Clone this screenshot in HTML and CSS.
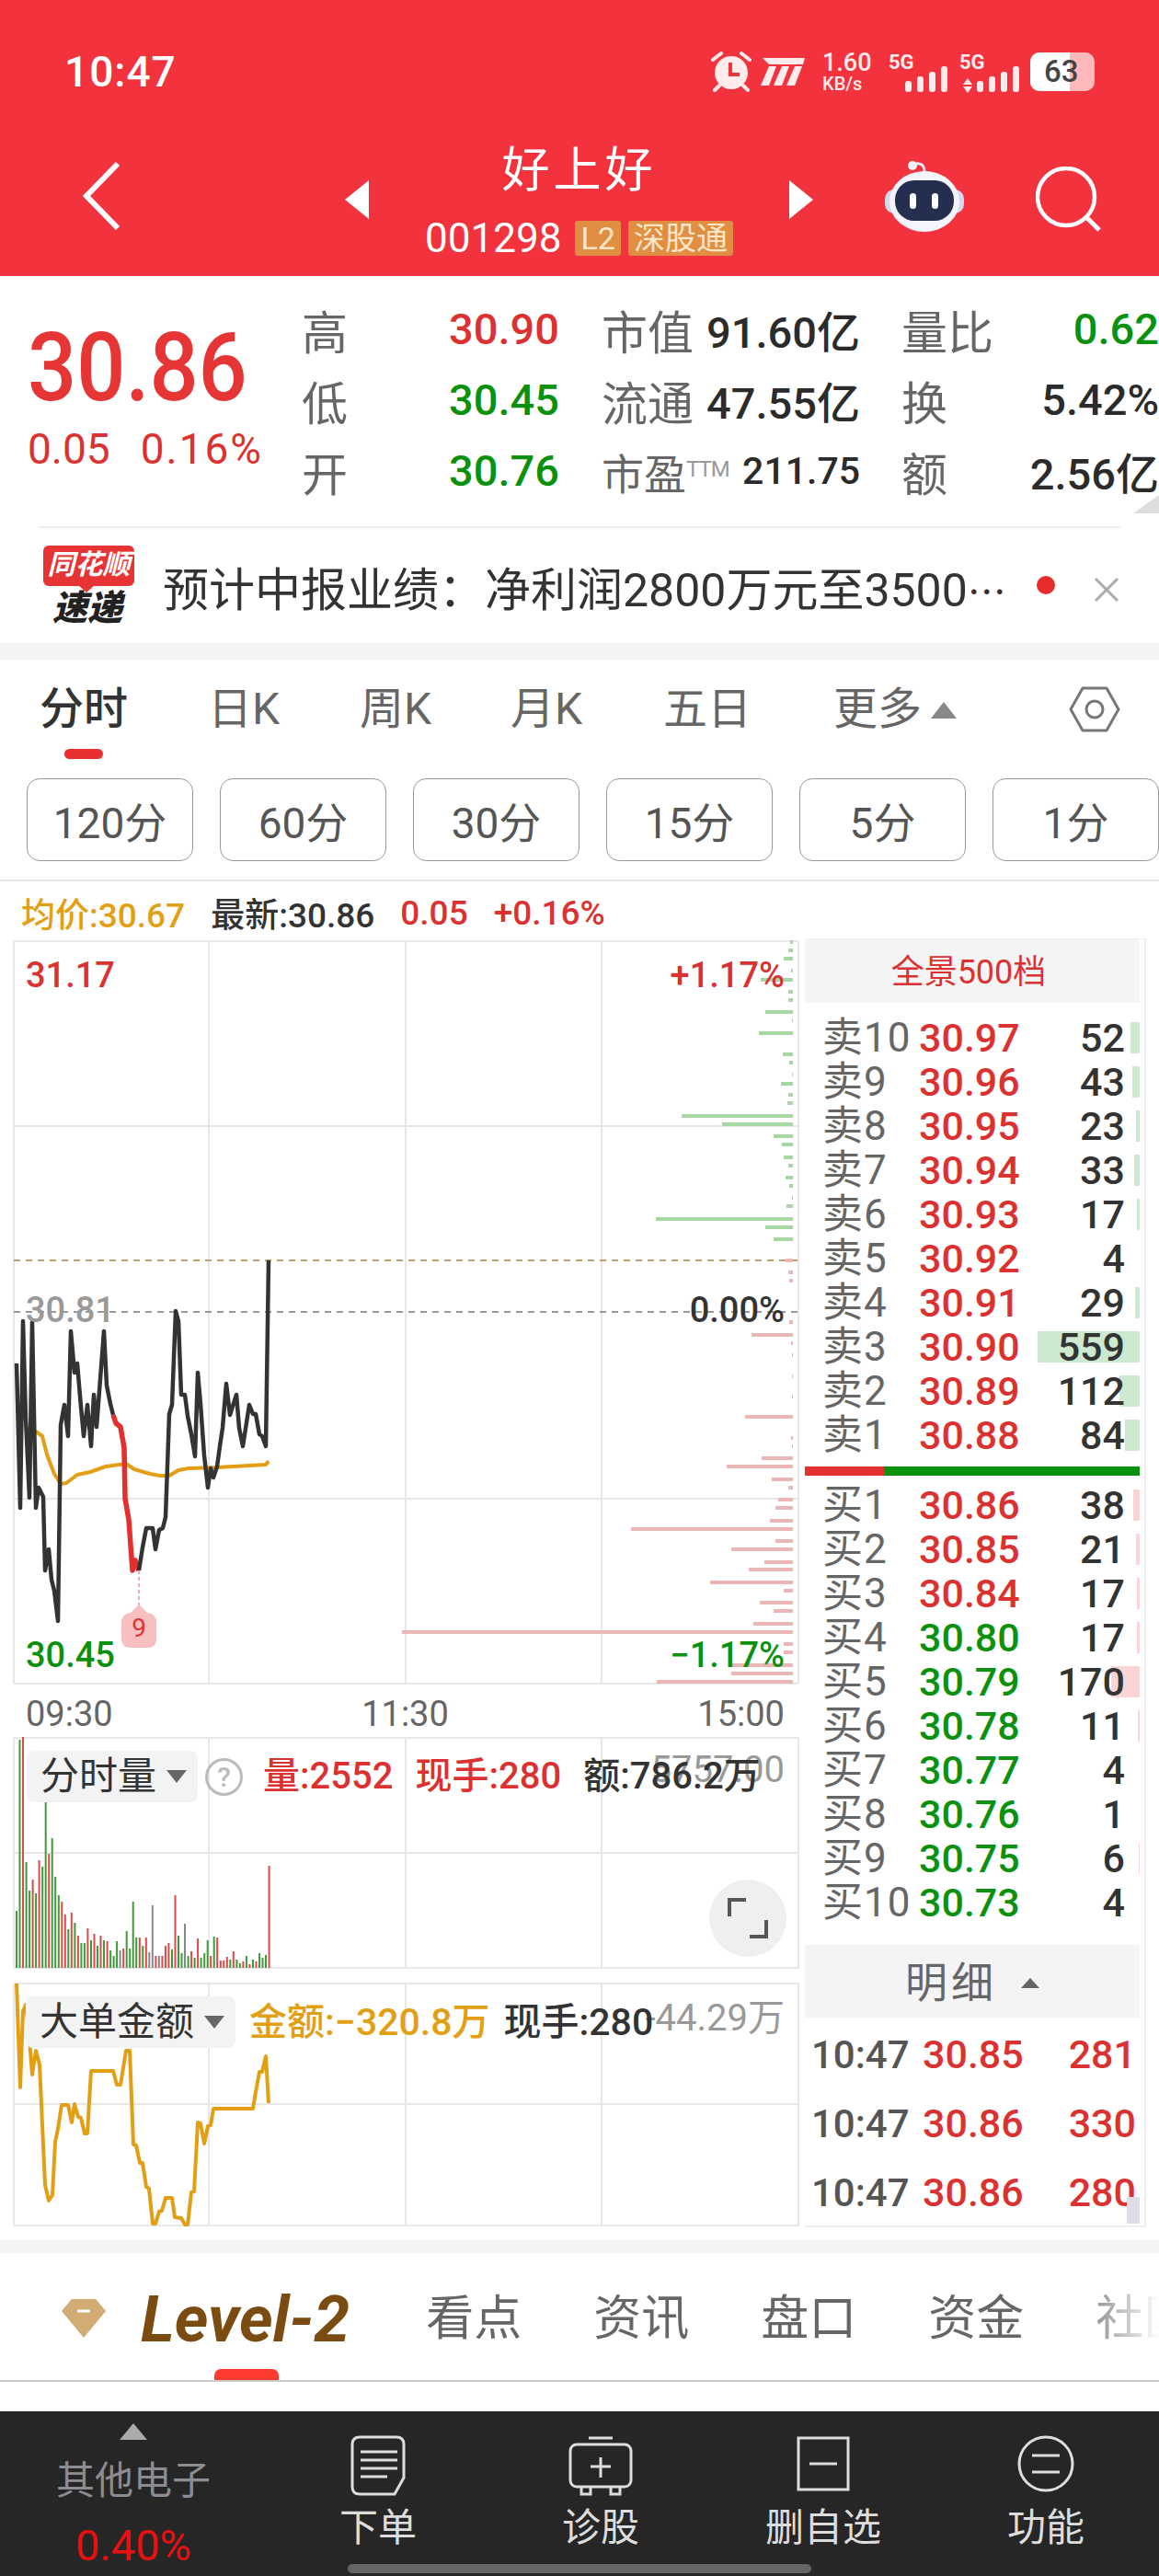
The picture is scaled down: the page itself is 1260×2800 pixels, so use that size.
FILE: index.html
```html
<!DOCTYPE html>
<html lang="zh-CN">
<head>
    <meta charset="UTF-8">
    <meta name="viewport" content="width=device-width, initial-scale=1.0">
    <title>好上好 001298</title>
    <link rel="stylesheet" href="styles.css">
</head>
<body>

<div class="app">
    <header class="top">
        <div class="status-bar">
            <span class="clock">10:47</span>
            <div class="status-icons">
                <svg class="ic-alarm" width="46" height="44" viewBox="0 0 46 44">
                    <circle cx="23" cy="23" r="18" fill="#ffeaec"/>
                    <path d="M22 12v13h10" fill="none" stroke="#f2323c" stroke-width="4"/>
                    <path d="M3 9l9-7M43 9l-9-7M10 37l-5 5M36 37l5 5" fill="none" stroke="#ffeaec" stroke-width="4" stroke-linecap="round"/>
                </svg>
                <svg class="ic-brand" width="48" height="30" viewBox="0 0 48 30">
                    <path d="M2 0H48L46 7H9Z" fill="#ffeaec"/>
                    <path d="M9 9H17L9 30H0ZM23 9H31L23 30H14ZM37 9H45L37 30H28Z" fill="#ffeaec"/>
                </svg>
                <div class="net-speed"><b>1.60</b><span>KB/s</span></div>
                <div class="signal">
                    <span class="sim-label">5G</span>
                    <div class="bars first"><i class="b1"></i><i class="b2"></i><i class="b3"></i><i class="b4"></i></div>
                </div>
                <div class="signal second">
                    <span class="sim-label">5G</span>
                    <div class="bars"><em class="updown"></em><i class="b1"></i><i class="b2"></i><i class="b3"></i><i class="b4"></i></div>
                </div>
                <div class="battery"><div class="battery-fill"></div><span>63</span></div>
            </div>
        </div>
        <div class="nav">
            <svg class="back" width="44" height="76" viewBox="0 0 44 76">
                <path d="M40 3L6 38l34 35" fill="none" stroke="#fff" stroke-width="6"/>
            </svg>
            <div class="stock">
                <span class="tri-left"></span>
                <div class="stock-name">
                    <div class="name">好上好</div>
                    <div class="code-row">
                        <span class="code">001298</span>
                        <span class="tag l2">L2</span>
                        <span class="tag">深股通</span>
                    </div>
                </div>
                <span class="tri-right"></span>
            </div>
            <svg class="robot" width="86" height="80" viewBox="0 0 86 80">
                <path d="M30 10q3-8 10-4q3 2 3 9" fill="none" stroke="#e8e8f6" stroke-width="3"/>
                <circle cx="30" cy="7" r="5" fill="#f0f0fa"/>
                <rect x="0" y="33" width="86" height="26" rx="10" fill="#d7d8ee"/>
                <ellipse cx="43" cy="46" rx="38" ry="33" fill="#f4f4fc"/>
                <rect x="11" y="23" width="64" height="44" rx="21" fill="#242f50"/>
                <rect x="27" y="37" width="7" height="17" rx="3.5" fill="#fff"/>
                <rect x="51" y="37" width="7" height="17" rx="3.5" fill="#fff"/>
            </svg>
            <svg class="search" width="72" height="72" viewBox="0 0 72 72">
                <circle cx="33" cy="33" r="31" fill="none" stroke="#fff" stroke-width="4.5"/>
                <path d="M55 55l14 14" stroke="#fff" stroke-width="5"/>
            </svg>
        </div>
    </header>

    <section class="quote">
        <div class="price-col">
            <div class="big-price">30.86</div>
            <div class="change"><span>0.05</span><span class="change-pct">0.16%</span></div>
        </div>
        <div class="stats">
            <span class="lbl">高</span><span class="red">30.90</span>
            <div class="stat wide"><span class="lbl">市值</span><b>91.60亿</b></div>
            <div class="stat"><span class="lbl">量比</span><span class="green">0.62</span></div>

            <span class="lbl">低</span><span class="green">30.45</span>
            <div class="stat wide"><span class="lbl">流通</span><b>47.55亿</b></div>
            <div class="stat"><span class="lbl">换</span><b>5.42%</b></div>

            <span class="lbl">开</span><span class="green">30.76</span>
            <div class="stat wide"><span class="lbl pe-lbl">市盈<sup>TTM</sup></span><b class="pe">211.75</b></div>
            <div class="stat"><span class="lbl">额</span><b>2.56亿</b></div>
        </div>
        <span class="corner"></span>
    </section>
    <div class="rule"></div>

    <section class="news">
        <div class="news-logo">
            <div class="logo-top">同花顺</div>
            <div class="logo-bottom">速递</div>
        </div>
        <div class="news-text">预计中报业绩：净利润2800万元至3500<span class="cjk-dots">…</span></div>
        <span class="news-dot"></span>
        <svg class="news-close" width="30" height="30" viewBox="0 0 30 30">
            <path d="M3 3l24 24M27 3L3 27" stroke="#aaa" stroke-width="3"/>
        </svg>
    </section>
    <div class="band"></div>

    <nav class="tabs">
        <a class="active">分时</a>
        <a>日K</a>
        <a>周K</a>
        <a>月K</a>
        <a>五日</a>
        <a class="more">更多<span class="tri-up"></span></a>
        <svg class="gear" width="56" height="52" viewBox="0 0 56 52">
            <path d="M15 3H41L54 26L41 49H15L2 26Z" fill="none" stroke="#777" stroke-width="3" stroke-linejoin="round"/>
            <circle cx="28" cy="26" r="9" fill="none" stroke="#777" stroke-width="3"/>
        </svg>
    </nav>
    <div class="periods">
        <button>120分</button>
        <button>60分</button>
        <button>30分</button>
        <button>15分</button>
        <button>5分</button>
        <button>1分</button>
    </div>
    <div class="chart-info">
        <span class="orange">均价:30.67</span>
        <span class="dark">最新:30.86</span>
        <span class="red">0.05</span>
        <span class="red">+0.16%</span>
    </div>

    <div class="market">
        <div class="charts">
            <div class="chart chart-main">
                <svg width="875" height="810" viewBox="0 1023 875 810">
                    <path class="grid" d="M15 1024H868M15 1225H868M15 1630H868M15 1831H868M15 1024V1831M227 1024V1831M441 1024V1831M654 1024V1831M868 1024V1831"/>
                    <path class="dash-gray" d="M15 1427H868"/>
                    <path class="dash-tan" d="M15 1371H868"/>
                    <path class="depth-green" d="M862 1025h-3M862 1034h-5M862 1043h-10M862 1056h-2M862 1066h-35M862 1079h-5M862 1088h-5M862 1101h-30M862 1110h-1M862 1124h-37M862 1147h-11M862 1156h-4M862 1169h-1M862 1179h-13M862 1191h-5M862 1200h-6M862 1214h-121M862 1223h-77M862 1236h-21M862 1245h-12M862 1259h-10M862 1268h-5M862 1281h-8M862 1290h-4M862 1303h-1M862 1312h-7M862 1326h-149M862 1335h-30M862 1348h-21"/>
                    <path class="depth-red" d="M862 1371h-8M862 1384h-5M862 1393h-4M862 1438h-4M862 1452h-45M862 1461h-2M862 1474h-1M862 1497h-1M862 1519h-1M862 1541h-52M862 1564h-2M862 1573h-1M862 1586h-34M862 1595h-72M862 1609h-23M862 1618h-5M862 1631h-16M862 1640h-19M862 1654h-25M862 1663h-176M862 1676h-19M862 1685h-67M862 1699h-31M862 1707h-48M862 1721h-90M862 1730h-10M862 1743h-36M862 1752h-21M862 1766h-43M862 1775h-425M862 1788h-10M862 1797h-10M862 1811h-67M862 1820h-67M862 1829h-148"/>
                    <polyline class="line-avg" points="28,1552 39,1557 46,1562 51,1582 54,1590 59,1603 66,1614 72,1613 84,1604 98,1601 115,1595 137,1592 146,1598 163,1603 174,1605 184,1605 194,1599 205,1597 236,1596 253,1595 289,1593 292,1589"/>
                    <polyline class="line-price" points="18,1483 22,1640 25,1437 28,1543 32,1629 35,1438 39,1640 42,1618 47,1628 49,1708 53,1685 56,1718 59,1730 63,1763 66,1550 70,1528 74,1562 77,1448 81,1493 84,1483 88,1530 91,1562 95,1528 99,1573 102,1517 105,1552 113,1448 116,1507 120,1527 123,1539"/>
                    <polyline class="line-hot" points="123,1539 126,1548 131,1552 135,1575 136,1630 140,1653 144,1708 147,1697 151,1708"/>
                    <polyline class="line-price" points="151,1708 155,1683 159,1662 166,1662 169,1685 173,1664 177,1662 180,1650 184,1538 187,1528 191,1426 194,1437 197,1517 201,1517 204,1540 208,1560 212,1584 215,1493 218,1527 222,1583 226,1618 229,1597 232,1607 236,1595 239,1573 242,1553 246,1505 250,1539 257,1517 260,1553 264,1573 271,1528 275,1538 278,1538 282,1560 285,1562 289,1573 292,1371"/>
                    <path class="pin-line" d="M151 1708V1747"/>
                    <path class="pin" d="M151 1745L160 1754Q170 1755 170 1765V1782Q170 1792 160 1792H142Q132 1792 132 1782V1765Q132 1755 142 1754Z"/>
                    <text class="pin-text" x="151" y="1780">9</text>
                </svg>
                <span class="axis axis-high red">31.17</span>
                <span class="axis axis-mid gray">30.81</span>
                <span class="axis axis-low green">30.45</span>
                <span class="axis pct-high red">+1.17%</span>
                <span class="axis pct-mid dark">0.00%</span>
                <span class="axis pct-low green">−1.17%</span>
            </div>
            <div class="time-axis"><span>09:30</span><span>11:30</span><span>15:00</span></div>

            <div class="chart chart-volume">
                <svg width="875" height="252" viewBox="0 1889 875 252">
                    <path class="grid" d="M15 1890H868M15 2015H868M15 2140H868M15 1890V2140M227 1890V2140M441 1890V2140M654 1890V2140M868 1890V2140"/>
                    <path class="vol-green" d="M18 2140V2078M21.5 2140V1892M28.6 2140V2025M32.1 2140V2056M39.1 2140V2059M46.2 2140V2030M49.7 2140V1951M56.7 2140V1999M60.2 2140V2041M63.8 2140V2061M74.3 2140V2098M81.4 2140V2091M88.4 2140V2113M91.9 2140V2113M99 2140V2110M106 2140V2116M113 2140V2110M120.1 2140V2121M123.6 2140V2127M127.1 2140V2111M137.7 2140V2100M141.2 2140V2119M144.7 2140V2068M148.2 2140V2107M155.3 2140V2116M187 2140V2120M194 2140V2105M197.5 2140V2124M204.6 2140V2127M211.6 2140V2129M218.6 2140V2129M222.2 2140V2124M225.7 2140V2110M232.7 2140V2106M250.3 2140V2131M257.4 2140V2131M260.9 2140V2135M267.9 2140V2127M275 2140V2131M282 2140V2124M285.5 2140V2129M289 2140V2126"/>
                    <path class="vol-red" d="M25 2140V1889M35.6 2140V2044M42.6 2140V2023M53.2 2140V2016M67.3 2140V2068M70.8 2140V2082M77.8 2140V2080M84.9 2140V2105M95.4 2140V2097M102.5 2140V2103M109.5 2140V2105M116.6 2140V2111M134.2 2140V2119M151.8 2140V2107M158.8 2140V2107M169.4 2140V2127M176.4 2140V2127M179.9 2140V2116M183.4 2140V2113M190.5 2140V2061M208.1 2140V2122M215.1 2140V2108M229.2 2140V2127M236.2 2140V2107M239.8 2140V2132M243.3 2140V2132M246.8 2140V2128M253.8 2140V2122M264.4 2140V2133M271.4 2140V2136M278.5 2140V2133M292.6 2140V2029"/>
                    <path class="vol-gray" d="M130.6 2140V2121M162.3 2140V2123M165.8 2140V2072M172.9 2140V2127M201 2140V2092"/>
                </svg>
                <span class="chart-max vol-max">5757.00</span>
                <div class="chart-head">
                    <div class="pill">分时量<span class="tri-down"></span></div>
                    <span class="help">?</span>
                    <span class="red stat-first">量:2552</span>
                    <span class="red">现手:280</span>
                    <span class="dark">额:786.2万</span>
                </div>
                <div class="fullscreen">
                    <svg width="44" height="44" viewBox="0 0 44 44">
                        <path d="M2 20V2H20M42 24V42H24" fill="none" stroke="#555" stroke-width="4"/>
                    </svg>
                </div>
            </div>

            <div class="chart chart-amount">
                <svg width="875" height="265" viewBox="0 2156 875 265">
                    <path class="grid" d="M15 2157H868M15 2288H868M15 2420H868M15 2157V2420M227 2157V2420M441 2157V2420M654 2157V2420M868 2157V2420"/>
                    <polyline class="line-amount" points="18,2157 22,2270 25,2187 28,2180 31,2205 35,2256 39,2230 43,2245 49,2376 53,2393 57,2387 60,2329 63,2315 67,2289 74,2289 78,2308 81,2288 85,2302 88,2303 92,2320 95,2320 99,2252 123,2252 127,2267 131,2267 137,2230 141,2230 145,2332 148,2333 152,2352 155,2352 159,2378 162,2380 166,2418 169,2418 173,2405 176,2404 180,2390 187,2390 190,2411 197,2412 201,2419 204,2419 208,2384 211,2383 215,2308 218,2309 222,2331 226,2312 229,2311 232,2293 275,2293 278,2275 282,2253 285,2253 289,2236 292,2287"/>
                </svg>
                <span class="chart-max amount-max">-44.29万</span>
                <div class="chart-head amount-head">
                    <div class="pill">大单金额<span class="tri-down"></span></div>
                    <span class="orange">金额:−320.8万</span>
                    <span class="dark">现手:280</span>
                </div>
            </div>
        </div>

        <aside class="book">
            <div class="book-title">全景500档</div>
            <div class="rows">
                <div class="row sell"><i style="width:10px"></i><span class="level">卖10</span><span class="red">30.97</span><span class="qty">52</span></div>
                <div class="row sell"><i style="width:8px"></i><span class="level">卖9</span><span class="red">30.96</span><span class="qty">43</span></div>
                <div class="row sell"><i style="width:4px"></i><span class="level">卖8</span><span class="red">30.95</span><span class="qty">23</span></div>
                <div class="row sell"><i style="width:6px"></i><span class="level">卖7</span><span class="red">30.94</span><span class="qty">33</span></div>
                <div class="row sell"><i style="width:3px"></i><span class="level">卖6</span><span class="red">30.93</span><span class="qty">17</span></div>
                <div class="row sell"><span class="level">卖5</span><span class="red">30.92</span><span class="qty">4</span></div>
                <div class="row sell"><i style="width:5px"></i><span class="level">卖4</span><span class="red">30.91</span><span class="qty">29</span></div>
                <div class="row sell"><i style="width:111px"></i><span class="level">卖3</span><span class="red">30.90</span><span class="qty">559</span></div>
                <div class="row sell"><i style="width:22px"></i><span class="level">卖2</span><span class="red">30.89</span><span class="qty">112</span></div>
                <div class="row sell"><i style="width:16px"></i><span class="level">卖1</span><span class="red">30.88</span><span class="qty">84</span></div>
            </div>
            <div class="split"><span class="split-red"></span><span class="split-green"></span></div>
            <div class="rows">
                <div class="row buy"><i style="width:7px"></i><span class="level">买1</span><span class="red">30.86</span><span class="qty">38</span></div>
                <div class="row buy"><i style="width:4px"></i><span class="level">买2</span><span class="red">30.85</span><span class="qty">21</span></div>
                <div class="row buy"><i style="width:3px"></i><span class="level">买3</span><span class="red">30.84</span><span class="qty">17</span></div>
                <div class="row buy"><i style="width:3px"></i><span class="level">买4</span><span class="green">30.80</span><span class="qty">17</span></div>
                <div class="row buy"><i style="width:31px"></i><span class="level">买5</span><span class="green">30.79</span><span class="qty">170</span></div>
                <div class="row buy"><i style="width:2px"></i><span class="level">买6</span><span class="green">30.78</span><span class="qty">11</span></div>
                <div class="row buy"><span class="level">买7</span><span class="green">30.77</span><span class="qty">4</span></div>
                <div class="row buy"><span class="level">买8</span><span class="green">30.76</span><span class="qty">1</span></div>
                <div class="row buy"><i style="width:1px"></i><span class="level">买9</span><span class="green">30.75</span><span class="qty">6</span></div>
                <div class="row buy"><span class="level">买10</span><span class="green">30.73</span><span class="qty">4</span></div>
            </div>
            <div class="detail-title">明细<span class="tri-up"></span></div>
            <div class="ticks">
                <div class="tick"><span class="tick-time">10:47</span><span class="red">30.85</span><span class="red tick-qty">281</span></div>
                <div class="tick"><span class="tick-time">10:47</span><span class="red">30.86</span><span class="red tick-qty">330</span></div>
                <div class="tick"><span class="tick-time">10:47</span><span class="red">30.86</span><span class="red tick-qty">280</span></div>
                <span class="scroll-thumb"></span>
            </div>
        </aside>
    </div>
    <div class="band band-low"></div>

    <nav class="sub-tabs">
        <svg class="gem" width="50" height="44" viewBox="0 0 50 44">
            <path d="M12 1H38L49 14L25 43L1 14Z" fill="#d2ab75"/>
            <path d="M18 14H32" stroke="#fff" stroke-width="3"/>
        </svg>
        <a class="level2">Level-2</a>
        <a>看点</a>
        <a>资讯</a>
        <a>盘口</a>
        <a>资金</a>
        <a class="faded">社区</a>
    </nav>

    <footer class="bottom">
        <div class="sector">
            <span class="sector-arrow"></span>
            <div class="sector-name">其他电子</div>
            <div class="sector-pct">0.40%</div>
        </div>
        <div class="action">
            <svg width="60" height="66" viewBox="0 0 60 66">
                <path d="M10 2H50Q58 2 58 10V46L48 64H10Q2 64 2 56V10Q2 2 10 2Z" fill="none" stroke="#ddd" stroke-width="3"/>
                <path d="M11 18H51M11 27H51M11 36H51M11 45H40" stroke="#ddd" stroke-width="3"/>
            </svg>
            <span>下单</span>
        </div>
        <div class="action">
            <svg width="70" height="66" viewBox="0 0 70 66">
                <path d="M22 3H48" stroke="#ddd" stroke-width="3"/>
                <rect x="2" y="10" width="66" height="46" rx="7" fill="none" stroke="#ddd" stroke-width="3"/>
                <path d="M14 56V64H24V56M46 56V64H56V56" fill="none" stroke="#ddd" stroke-width="3"/>
                <path d="M35 24V46M24 34H46" stroke="#ddd" stroke-width="3"/>
            </svg>
            <span>诊股</span>
        </div>
        <div class="action">
            <svg width="60" height="66" viewBox="0 0 60 66">
                <rect x="3" y="3" width="54" height="56" fill="none" stroke="#ddd" stroke-width="3"/>
                <path d="M15 31H45" stroke="#ddd" stroke-width="3"/>
            </svg>
            <span>删自选</span>
        </div>
        <div class="action">
            <svg width="62" height="66" viewBox="0 0 62 66">
                <ellipse cx="31" cy="31" rx="29" ry="29" fill="none" stroke="#ddd" stroke-width="3"/>
                <path d="M16 22H46M16 40H46" stroke="#ddd" stroke-width="3"/>
            </svg>
            <span>功能</span>
        </div>
        <span class="home-bar"></span>
    </footer>
</div>

</body>
</html>
```

FILE: styles.css
```css
* {
    box-sizing: border-box;
}
body {
    margin: 0;
    background-color: #fff;
    font-family: Roboto, "Noto Sans CJK SC", sans-serif;
    color: #333;
}
.app {
    width: 1260px;
    height: 2800px;
    overflow: hidden;
}
.red { color: #db3131; }
.green { color: #0a920f; }
.orange { color: #e39f14; }
.dark { color: #333; }
.gray { color: #999; }

/* red header */
.top {
    height: 300px;
    background-color: #f2323c;
    color: #fff;
}
.status-bar {
    height: 140px;
    display: flex;
    justify-content: space-between;
    padding: 52px 70px 0 70px;
}
.clock {
    font-size: 46px;
    line-height: 52px;
    font-weight: 500;
    letter-spacing: 1px;
    color: #fff;
}
.status-icons {
    display: flex;
    align-items: flex-start;
    height: 46px;
}
.ic-alarm {
    margin: 4px 0 0 0;
}
.ic-brand {
    margin: 11px 0 0 9px;
}
.net-speed {
    margin: 3px 0 0 19px;
    width: 52px;
    color: #ffeaec;
}
.net-speed b {
    display: block;
    font-size: 27px;
    line-height: 26px;
    font-weight: 500;
}
.net-speed span {
    display: block;
    font-size: 20px;
    line-height: 20px;
    font-weight: 500;
}
.signal {
    position: relative;
    width: 64px;
    height: 46px;
    margin: 0 0 0 20px;
}
.signal.second {
    width: 65px;
    margin-left: 13px;
}
.sim-label {
    position: absolute;
    left: 0;
    top: 5px;
    font-size: 22px;
    line-height: 22px;
    font-weight: 700;
    color: #ffeaec;
}
.bars {
    position: absolute;
    right: 0;
    top: 16px;
    height: 32px;
    display: flex;
    align-items: flex-end;
    gap: 6px;
}
.bars i {
    width: 7px;
    border-radius: 3px;
    background-color: #ffeaec;
}
.bars .b1 { height: 12px; }
.bars .b2 { height: 17px; }
.bars .b3 { height: 22px; }
.bars .b4 { height: 28px; }
.updown {
    width: 10px;
    height: 7px;
    border-left: 5px solid transparent;
    border-right: 5px solid transparent;
    border-bottom: 7px solid #ffeaec;
    margin-bottom: 8px;
    margin-right: -1px;
    position: relative;
}
.updown::after {
    content: "";
    position: absolute;
    left: -5px;
    top: 9px;
    border-left: 5px solid transparent;
    border-right: 5px solid transparent;
    border-top: 7px solid #ffeaec;
}
.battery {
    position: relative;
    width: 70px;
    height: 42px;
    margin: 5px 0 0 12px;
    border-radius: 10px;
    background-color: #ffb9bc;
    overflow: hidden;
    text-align: center;
}
.battery-fill {
    position: absolute;
    left: 0;
    top: 0;
    bottom: 0;
    width: 43px;
    background-color: #fff;
}
.battery span {
    position: absolute;
    left: 15px;
    top: 2px;
    font-size: 33px;
    line-height: 38px;
    font-weight: 500;
    color: #444;
}
.nav {
    height: 160px;
    display: flex;
    align-items: flex-start;
    padding-left: 88px;
}
.back {
    margin-top: 35px;
}
.stock {
    width: 509px;
    margin-left: 243px;
    display: flex;
    justify-content: space-between;
    align-items: flex-start;
}
.tri-left, .tri-right {
    width: 0;
    height: 0;
    margin-top: 56px;
    border-top: 21px solid transparent;
    border-bottom: 21px solid transparent;
}
.tri-left { border-right: 26px solid #fff; }
.tri-right { border-left: 26px solid #fff; }
.stock-name {
    text-align: center;
    margin-top: 16px;
}
.name {
    font-size: 52px;
    line-height: 60px;
    letter-spacing: 4px;
}
.code-row {
    display: flex;
    align-items: center;
    gap: 8px;
    margin-top: 21px;
    height: 44px;
}
.code {
    font-size: 44px;
    margin-right: 7px;
}
.tag {
    height: 38px;
    padding: 0 6px;
    line-height: 38px;
    font-size: 34px;
    color: #fce6c8;
    background-color: #e08f42;
    border-radius: 3px;
}
.robot {
    margin: 33px 0 0 78px;
}
.search {
    margin: 41px 0 0 78px;
}

/* quote block */
.quote {
    position: relative;
    height: 272px;
    display: flex;
}
.price-col {
    width: 328px;
    padding: 42px 0 0 30px;
}
.big-price {
    font-size: 104px;
    line-height: 116px;
    font-weight: 500;
    color: #e63535;
    transform: scaleX(0.9);
    transform-origin: left center;
    white-space: nowrap;
}
.change {
    display: flex;
    gap: 33px;
    font-size: 46px;
    line-height: 60px;
    color: #db3131;
}
.change-pct {
    letter-spacing: 2px;
}
.stats {
    display: grid;
    grid-template-columns: 160px 166px 326px 280px;
    grid-auto-rows: 77px;
    padding-top: 19px;
    font-size: 47px;
    font-weight: 500;
    align-items: center;
}
.lbl {
    font-size: 50px;
    font-weight: 400;
    color: #666;
    white-space: nowrap;
}
.stats b {
    font-size: 47px;
    font-weight: 500;
    color: #2b2b2b;
    white-space: nowrap;
}
.stat {
    display: flex;
    justify-content: space-between;
    align-items: center;
}
.stat.wide {
    padding-right: 45px;
}
.pe-lbl {
    font-size: 46px;
}
.stats sup {
    font-size: 24px;
    line-height: 0;
    letter-spacing: -1px;
    color: #999;
    vertical-align: 14px;
}
.stats b.pe {
    font-size: 41px;
}
.corner {
    position: absolute;
    right: 0;
    bottom: 14px;
    border-left: 28px solid transparent;
    border-bottom: 20px solid #ddd;
}
.rule {
    height: 2px;
    margin: 0 42px;
    background-color: #eee;
}

/* news strip */
.news {
    height: 125px;
    display: flex;
    align-items: flex-start;
    padding: 19px 42px 0 44px;
}
.news-logo {
    width: 102px;
    margin-right: 31px;
    flex-shrink: 0;
    text-align: center;
}
.logo-top {
    position: relative;
    height: 44px;
    line-height: 42px;
    margin-left: 3px;
    border-radius: 6px;
    background-color: #e63333;
    color: #fff;
    font-size: 30px;
    font-weight: 700;
    font-style: italic;
    white-space: nowrap;
}
.logo-top::after {
    content: "";
    position: absolute;
    left: 38px;
    top: 43px;
    border-left: 9px solid transparent;
    border-right: 9px solid transparent;
    border-top: 8px solid #e63333;
}
.logo-bottom {
    margin-top: 5px;
    font-size: 38px;
    line-height: 38px;
    font-weight: 900;
    font-style: italic;
    color: #222;
}
.news-text {
    width: 920px;
    flex-shrink: 0;
    font-size: 50px;
    line-height: 96px;
    white-space: nowrap;
    color: #333;
}
.cjk-dots {
    font-family: "Noto Sans CJK SC", sans-serif;
    font-size: 42px;
}
.news-dot {
    width: 20px;
    height: 20px;
    margin: 33px 0 0 30px;
    flex-shrink: 0;
    border-radius: 50%;
    background-color: #e92b2b;
}
.news-close {
    margin: 33px 0 0 41px;
    flex-shrink: 0;
}
.band {
    height: 18px;
    background-color: #f4f4f4;
}

/* period tabs */
.tabs {
    position: relative;
    height: 121px;
    padding: 24px 0 0 43px;
    display: grid;
    grid-template-columns: 183px 165px 164px 166px 185px 160px;
    font-size: 48px;
    line-height: 60px;
    color: #666;
}
.tabs a {
    position: relative;
    white-space: nowrap;
}
.tabs .active {
    color: #333;
    font-weight: 500;
}
.tabs .active::after {
    content: "";
    position: absolute;
    left: 27px;
    top: 73px;
    width: 42px;
    height: 11px;
    border-radius: 6px;
    background-color: #e93030;
}
.tri-up {
    display: inline-block;
    margin-left: 10px;
    vertical-align: 6px;
    border-left: 14px solid transparent;
    border-right: 14px solid transparent;
    border-bottom: 18px solid #888;
}
.gear {
    position: absolute;
    right: 42px;
    top: 28px;
}
.periods {
    display: flex;
    gap: 29px;
    height: 112px;
    margin-top: 8px;
    padding-left: 29px;
    border-bottom: 2px solid #e6e6e6;
    overflow: hidden;
}
.periods button {
    flex: 0 0 181px;
    height: 90px;
    border: 1px solid #999;
    border-radius: 14px;
    background-color: #fff;
    font-family: inherit;
    font-size: 46px;
    color: #555;
}
.chart-info {
    height: 62px;
    display: flex;
    align-items: center;
    padding: 6px 0 0 23px;
    font-size: 37px;
    font-weight: 500;
    gap: 28px;
}

/* charts and order book */
.market {
    display: flex;
    height: 1401px;
    padding-top: 2px;
}
.charts {
    width: 875px;
}
.chart {
    position: relative;
}
.chart svg {
    display: block;
}
.grid {
    fill: none;
    stroke: #e7e7e7;
    stroke-width: 2;
}
.dash-gray, .dash-tan {
    fill: none;
    stroke-width: 2;
    stroke-dasharray: 7 6;
}
.dash-gray { stroke: #999; }
.dash-tan { stroke: #c2a072; }
.depth-green, .depth-red {
    fill: none;
    stroke-width: 4;
}
.depth-green { stroke: #a6d8a6; }
.depth-red { stroke: #eab6b6; }
.line-price, .line-hot, .line-avg, .line-amount {
    fill: none;
    stroke-width: 4.5;
    stroke-linejoin: round;
}
.line-price { stroke: #333; }
.line-hot { stroke: #e52f2f; stroke-width: 5.5; }
.line-avg { stroke: #e39f14; stroke-width: 4; }
.line-amount { stroke: #e39f14; stroke-width: 4; }
.pin-line {
    stroke: #e55;
    stroke-width: 1;
    stroke-dasharray: 4 3;
}
.pin { fill: #f7bfbf; }
.pin-text {
    font-size: 28px;
    fill: #d33;
    text-anchor: middle;
}
.axis {
    position: absolute;
    font-size: 38px;
    line-height: 44px;
    font-weight: 500;
}
.axis-high { left: 28px; top: 16px; }
.axis-mid { left: 28px; top: 380px; }
.axis-low { left: 28px; top: 755px; }
.pct-high { right: 22px; top: 16px; }
.pct-mid { right: 22px; top: 380px; }
.pct-low { right: 22px; top: 755px; }
.time-axis {
    height: 56px;
    display: flex;
    justify-content: space-between;
    align-items: center;
    padding: 5px 22px 0 28px;
    font-size: 38px;
    color: #666;
}
.chart-volume {
    height: 252px;
}
.chart-amount {
    height: 265px;
    margin-top: 15px;
}
.chart-max {
    position: absolute;
    right: 22px;
    font-size: 40px;
    line-height: 44px;
    color: #999;
}
.vol-max { top: 14px; }
.amount-max { top: 17px; }
.chart-head {
    position: absolute;
    left: 29px;
    top: 15px;
    display: flex;
    align-items: center;
    gap: 24px;
    font-size: 40px;
    line-height: 56px;
    font-weight: 500;
    white-space: nowrap;
}
.amount-head {
    top: 15px;
    left: 28px;
    gap: 15px;
    font-size: 41px;
}
.pill {
    display: flex;
    align-items: center;
    height: 56px;
    padding: 0 12px 0 15px;
    border-radius: 8px;
    background-color: #f3f3f3;
    font-size: 42px;
    font-weight: 400;
    color: #333;
}
.tri-down {
    margin-left: 11px;
    border-left: 11px solid transparent;
    border-right: 11px solid transparent;
    border-top: 14px solid #666;
}
.help {
    width: 41px;
    height: 41px;
    margin: 0 -2px 0 -16px;
    border: 3px solid #bbb;
    border-radius: 50%;
    font-size: 30px;
    line-height: 35px;
    text-align: center;
    color: #bbb;
}
.fullscreen {
    position: absolute;
    left: 771px;
    top: 155px;
    width: 84px;
    height: 84px;
    border-radius: 50%;
    background-color: #efefef;
    display: flex;
    align-items: center;
    justify-content: center;
}
.vol-green, .vol-red, .vol-gray {
    fill: none;
    stroke-width: 2;
}
.vol-green { stroke: #3f9a3a; }
.vol-red { stroke: #db4a4a; }
.vol-gray { stroke: #888; }

.book {
    position: relative;
    width: 371px;
    margin-top: -2px;
    padding-right: 5px;
    border-top: 1px solid #eee;
    border-right: 2px solid #eee;
    border-bottom: 2px solid #eee;
}
.book-title {
    height: 69px;
    padding-right: 8px;
    line-height: 72px;
    background-color: #f4f4f4;
    text-align: center;
    font-size: 36px;
    color: #db3131;
}
.book-title + .rows {
    margin-top: 14px;
}
.row {
    position: relative;
    height: 48px;
    line-height: 48px;
    display: flex;
    padding-left: 19px;
    font-size: 43px;
    font-weight: 500;
}
.row i {
    position: absolute;
    right: 0;
    top: 7px;
    height: 34px;
}
.sell i { background-color: #cde9cf; }
.buy i { background-color: #f9d5d5; }
.level {
    position: relative;
    width: 105px;
    font-size: 44px;
    font-weight: 400;
    letter-spacing: 1px;
    color: #666;
    white-space: nowrap;
}
.row .red, .row .green {
    position: relative;
}
.qty {
    position: relative;
    margin-left: auto;
    margin-right: 16px;
    color: #333;
}
.split {
    display: flex;
    height: 10px;
    margin: 10px 0 8px;
}
.split-red {
    width: 86px;
    background-color: #e33030;
}
.split-green {
    flex: 1;
    background-color: #0a920f;
}
.detail-title {
    height: 79px;
    margin-top: 22px;
    line-height: 82px;
    background-color: #f4f4f4;
    text-align: center;
    font-size: 46px;
    letter-spacing: 4px;
    color: #666;
}
.detail-title .tri-up {
    margin-left: 26px;
    vertical-align: 10px;
    border-left-width: 10px;
    border-right-width: 10px;
    border-bottom-width: 11px;
    border-bottom-color: #666;
}
.ticks {
    position: relative;
    margin-top: 3px;
}
.tick {
    height: 75px;
    line-height: 75px;
    display: flex;
    padding-left: 7px;
    font-size: 43px;
    font-weight: 500;
}
.tick-time {
    width: 121px;
    color: #555;
    font-size: 42px;
}
.tick-qty {
    margin-left: auto;
    margin-right: 4px;
}
.scroll-thumb {
    position: absolute;
    right: 0;
    bottom: 4px;
    width: 14px;
    height: 29px;
    background-color: #dddde6;
}
.band-low {
    height: 14px;
    margin-top: 14px;
}

/* lower tabs */
.sub-tabs {
    position: relative;
    height: 140px;
    padding: 39px 0 0 66px;
    display: flex;
    align-items: flex-start;
    gap: 78px;
    font-size: 52px;
    line-height: 66px;
    color: #666;
    border-bottom: 2px solid #ccc;
    white-space: nowrap;
    overflow: hidden;
}
.gem {
    position: absolute;
    left: 66px;
    top: 49px;
}
.sub-tabs a {
    position: relative;
}
.sub-tabs .level2 {
    margin: 0 5px 0 87px;
    font-size: 70px;
    font-weight: 700;
    font-style: italic;
    color: #7a4c12;
}
.sub-tabs .level2::after {
    content: "";
    position: absolute;
    left: 80px;
    top: 87px;
    width: 70px;
    height: 14px;
    border-radius: 7px 7px 0 0;
    background-color: #ff3b30;
}
.faded::after {
    content: "";
    position: absolute;
    left: 0;
    top: 0;
    width: 70px;
    height: 66px;
    background: linear-gradient(to right, rgba(255,255,255,0.3), #fff);
}

/* dark bottom bar */
.bottom {
    position: relative;
    height: 179px;
    margin-top: 32px;
    display: grid;
    grid-template-columns: 290px repeat(4, 242px);
    background-color: #262626;
}
.sector {
    text-align: center;
}
.sector-arrow {
    display: inline-block;
    margin-top: 13px;
    border-left: 15px solid transparent;
    border-right: 15px solid transparent;
    border-bottom: 18px solid #aaa;
}
.sector-name {
    font-size: 42px;
    line-height: 60px;
    margin-top: 11px;
    color: #8c8c92;
}
.sector-pct {
    font-size: 47px;
    line-height: 60px;
    margin-top: 10px;
    color: #e81010;
}
.action {
    display: flex;
    flex-direction: column;
    align-items: center;
    padding-top: 26px;
    font-size: 42px;
    line-height: 50px;
    color: #ddd;
}
.action svg {
    display: block;
    height: 66px;
}
.action span {
    margin-top: 10px;
}
.home-bar {
    position: absolute;
    left: 378px;
    top: 166px;
    width: 504px;
    height: 10px;
    border-radius: 5px;
    background-color: #666;
}
```
